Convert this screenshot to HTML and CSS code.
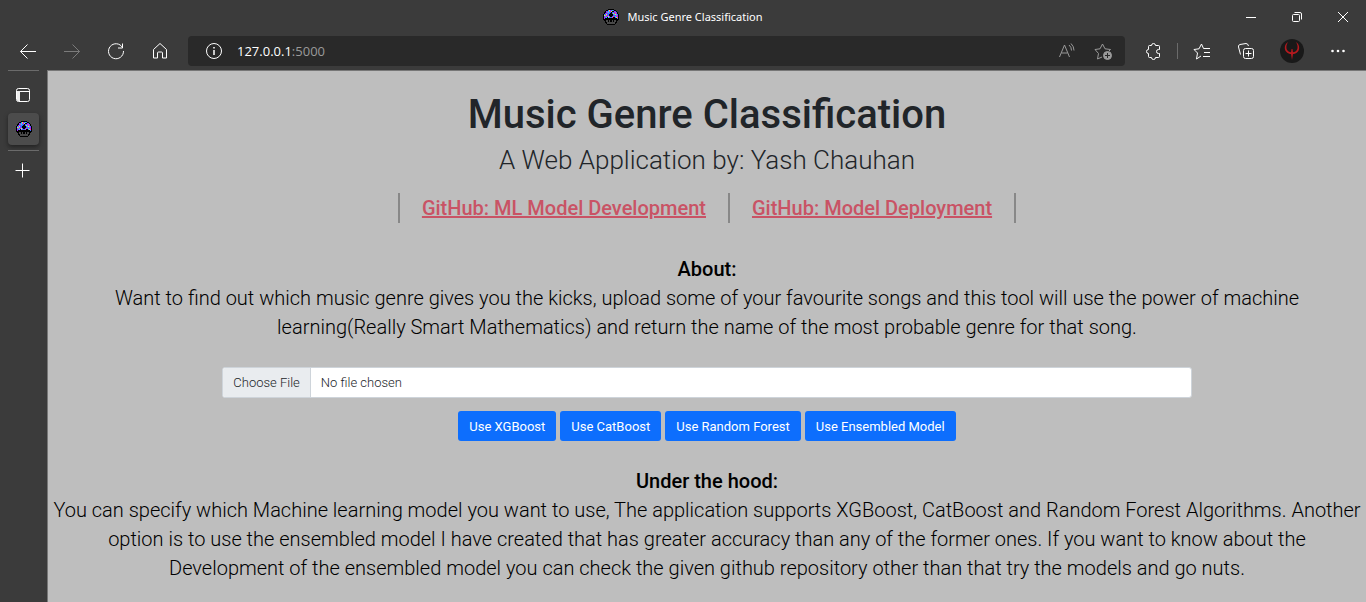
FILE: index.html
```html
<!DOCTYPE html>
<html lang="en">
<head>
<meta charset="utf-8">
<title>Music Genre Classification</title>
<link rel="stylesheet" href="styles.css">
</head>
<body>
<svg class="defs" aria-hidden="true">
  <symbol id="mushroom" viewBox="0 0 16 16" shape-rendering="crispEdges">
    <path fill="#000" d="M5 0h6v1h2v1h1v1h1v2h1v6h-1v1h-1v2h-1v1h-1v1H4v-1H3v-1H2v-2H1v-1H0V5h1V3h1V2h1V1h2z"/>
    <path fill="#3d6cff" d="M5 1h6v1h2v1h1v2h1v5h-1V9h-2V8h-2v1H6V8H4v1H2v1H1V5h1V3h1V2h2z"/>
    <path fill="#a626ff" d="M3 2h1v1H3zM2 4h2v1H2zM4 6h1v2H4zM1 8h1v2H1zM11 2h1v2h-1zM11 6h1v1h-1zM14 6h1v2h-1zM7 1h1v2H7zM13 4h1v1h-1zM6 8h1v1H6z"/>
    <path fill="#20dcff" d="M5 2h1v2H5zM2 6h1v1H2zM11 5h1v1h-1zM12 7h1v1h-1zM3 8h1v1H3zM9 1h1v1H9zM13 5h1v1h-1zM5 8h1v1H5z"/>
    <path fill="#f4ec45" d="M8 2h1v1H8zM3 5h1v1H3zM10 4h1v1h-1zM13 8h1v1h-1zM5 7h1v1H5zM6 1h1v1H6zM1 6h1v1H1zM12 5h1v1h-1z"/>
    <path fill="#ff38a8" d="M6 2h1v1H6zM10 7h1v1h-1zM2 7h1v1H2zM12 3h1v2h-1zM14 8h1v1h-1zM4 3h1v1H4zM3 6h1v1H3zM9 8h1v1H9zM13 6h1v1h-1z"/>
    <path fill="#000" d="M7 4h2v1h1v2H9v1H7V7H6V5h1zM9 2h2v1H9zM2 3h1v1H2zM8 3h1v1H8z"/>
    <path fill="#494949" d="M3 11h2v2h1v-2h1v2h2v-2h1v2h1v-2h2v2h-1v2H4v-2H3z"/>
  </symbol>
</svg>
<div class="browser">
  <header class="chrome">
    <div class="titlebar">
      <div class="window-title"><svg class="favicon"><use href="#mushroom"/></svg><span>Music Genre Classification</span></div>
      <div class="window-controls">
        <button class="win-btn" aria-label="Minimize"><svg viewBox="0 0 16 16"><path d="M3 8.500h10"/></svg></button>
        <button class="win-btn" aria-label="Restore"><svg viewBox="0 0 16 16"><rect x="3.500" y="5.500" width="7" height="7" rx="1"/><path d="M5.500 3.500h5.500a1.500 1.500 0 0 1 1.500 1.500v5.500"/></svg></button>
        <button class="win-btn" aria-label="Close"><svg viewBox="0 0 16 16"><path d="M3 3l10 10M13 3L3 13"/></svg></button>
      </div>
    </div>
    <div class="toolbar">
      <button class="tool" aria-label="Back"><svg viewBox="0 0 20 20"><path d="M18 10.500H2.500M9.500 3.500l-7 7 7 7"/></svg></button>
      <button class="tool faded" aria-label="Forward"><svg viewBox="0 0 20 20"><path d="M2 10.500h15.500M10.500 3.500l7 7-7 7"/></svg></button>
      <button class="tool" aria-label="Refresh"><svg viewBox="0 0 20 20"><path d="M16.500 6.500A7.500 7.500 0 1 0 17.500 10M16.500 2.500v4.500H12"/></svg></button>
      <button class="tool" aria-label="Home"><svg viewBox="0 0 20 20"><path d="M3.500 8.500L10 2.500l6.500 6v8.500h-4v-5a1 1 0 0 0-1-1h-3a1 1 0 0 0-1 1v5h-4z"/></svg></button>
      <div class="address">
        <button class="tool" aria-label="Site information"><svg viewBox="0 0 20 20"><circle cx="10" cy="10" r="7.500"/><path d="M10 9v5M10 6v1.500" stroke-width="1.500"/></svg></button>
        <div class="url">127.0.0.1<span>:5000</span></div>
        <button class="tool muted" aria-label="Read aloud"><svg viewBox="0 0 20 20"><path d="M2.500 16L7.500 4l5 12M4.500 12h6M12 4q2.500 2 2.500 5.500M14 2.500q3 3 3 7"/></svg></button>
        <button class="tool muted" aria-label="Add to favorites"><svg viewBox="0 0 20 20"><path d="M9 16l-4.500 2 1-5.500L2 8.500l5-.7L9.500 3l2.500 4.800 5.500.7-1.500 1.500"/><circle cx="14.500" cy="14.500" r="4" fill="#9a9a9a"/><path stroke="#292929" d="M14.500 12v5M12 14.500h5"/></svg></button>
      </div>
      <div class="actions">
        <button class="tool" aria-label="Extensions"><svg viewBox="0 0 20 20"><path d="M6.500 4.500h2a2 2 0 0 1 4 0h3a1 1 0 0 1 1 1v3h-1a2 2 0 0 0 0 4h1v3a1 1 0 0 1-1 1h-3a2 2 0 0 1-4 0h-2a1 1 0 0 1-1-1v-3a2 2 0 0 1 0-4v-3a1 1 0 0 1 1-1z"/></svg></button>
        <span class="separator"></span>
        <button class="tool" aria-label="Favorites"><svg viewBox="0 0 20 20"><path d="M9 15l-4.500 3 1-6L2 8.500l5-.7L9.500 3l2 4.500H18M12 11.500h6M11 15.500h7"/></svg></button>
        <button class="tool" aria-label="Collections"><svg viewBox="0 0 20 20"><rect x="7.500" y="7.500" width="10" height="10" rx="2"/><path d="M12.500 9.500v6M9.500 12.500h6M4.500 13.500L2.500 6q-.5-2 1.500-2.500l6-1q2 0 2.500 2.500"/></svg></button>
        <button class="profile" aria-label="Profile"><svg viewBox="0 0 24 24"><circle cx="12" cy="12" r="12" fill="#191919"/><path fill="#b5191e" d="M8 3C4.500 5 4 10 6 12.500c1.500 2 4 2.500 5 2.500l1 6 1-6c1 0 3.500-.5 5-2.500 2-2.500 1.500-7.500-2-9.500 2 3 2 7 .5 8.500-1 1-2 1.500-3.500 1.700l-.5-3.200h-1l-.5 3.200c-1.500-.2-2.500-.7-3.500-1.700C6 10 6 6 8 3z"/></svg></button>
        <button class="tool" aria-label="Settings and more"><svg viewBox="0 0 20 20"><g fill="#fff" stroke="none"><circle cx="4.500" cy="10" r="1.300"/><circle cx="10" cy="10" r="1.300"/><circle cx="15.500" cy="10" r="1.300"/></g></svg></button>
      </div>
    </div>
  </header>
  <div class="workspace">
    <nav class="tabs" aria-label="Vertical tabs">
      <button class="tab" aria-label="Tab actions"><svg viewBox="0 0 16 16"><rect x="1.500" y="1.500" width="13" height="13" rx="2"/><path d="M4.500 4.500h10M4.500 4v10.500"/><path fill="#eee" stroke="none" d="M2 4h3v10H3q-1 0-1-1z"/></svg></button>
      <button class="tab active" aria-label="Music Genre Classification"><svg viewBox="0 0 16 16"><use href="#mushroom"/></svg></button>
      <button class="tab new" aria-label="New tab"><svg viewBox="0 0 16 16"><path d="M7.500 .5v14M.5 7.500h14"/></svg></button>
    </nav>
    <main class="page">
      <h1>Music Genre Classification</h1>
      <p class="subtitle">A Web Application by: Yash Chauhan</p>
      <div class="links">
        <a href="#model">GitHub: ML Model Development</a>
        <a href="#deployment">GitHub: Model Deployment</a>
      </div>
      <section class="about">
        <h2>About:</h2>
        <p>Want to find out which music genre gives you the kicks, upload some of your favourite songs and this tool will use the power of machine learning(Really Smart Mathematics) and return the name of the most probable genre for that song.</p>
      </section>
      <form class="upload">
        <input type="file" aria-label="Song file">
        <div class="models">
          <button type="button">Use XGBoost</button>
          <button type="button">Use CatBoost</button>
          <button type="button">Use Random Forest</button>
          <button type="button">Use Ensembled Model</button>
        </div>
      </form>
      <section class="hood">
        <h2>Under the hood:</h2>
        <p>You can specify which Machine learning model you want to use, The application supports XGBoost, CatBoost and Random Forest Algorithms. Another option is to use the ensembled model I have created that has greater accuracy than any of the former ones. If you want to know about the Development of the ensembled model you can check the given github repository other than that try the models and go nuts.</p>
      </section>
    </main>
  </div>
</div>
</body>
</html>
```
FILE: styles.css
```css
* { box-sizing: border-box; }
body { margin: 0; background: #3b3b3b; font-family: Roboto, "Liberation Sans", sans-serif; }
h1, h2, p { margin: 0; }
button { font: inherit; border: 0; padding: 0; background: none; color: inherit; }
svg { fill: none; stroke: #fff; stroke-width: 1; }
.defs { position: absolute; width: 0; height: 0; }
.browser { min-height: 100vh; display: flex; flex-direction: column; }
.chrome { color: #fff; font-family: "Open Sans", "Noto Sans", sans-serif; }
.titlebar { display: grid; grid-template-columns: 1fr auto 1fr; align-items: center; height: 33px; }
.window-title { grid-column: 2; display: flex; align-items: center; gap: 8px; font-family: "Noto Sans", sans-serif; font-size: 11px; }
.favicon { width: 16px; height: 16px; stroke: none; }
#mushroom { stroke: none; }
.window-controls { display: flex; justify-content: flex-end; }
.win-btn { width: 46px; height: 32px; display: grid; place-items: center; }
.win-btn svg { width: 16px; height: 16px; }
.toolbar { display: flex; align-items: center; height: 37px; padding: 0 16px 2px 6px; }
.tool { width: 44px; height: 30px; display: grid; place-items: center; flex: none; }
.tool svg { width: 20px; height: 20px; }
.faded svg { stroke: #7b7b7b; }
.muted svg { stroke: #9a9a9a; }
.address { flex: 1; display: flex; align-items: center; height: 30px; margin-left: 6px; padding: 0 4px; border-radius: 4px; background: #292929; }
.address .muted { width: 36px; }
.url { flex: 1; padding-left: 1px; font-size: 13px; }
.url span { color: #9a9a9a; }
.actions { display: flex; align-items: center; padding-left: 6px; }
.separator { width: 1px; height: 16px; margin: 0 2px; background: #6b6b6b; }
.profile { width: 24px; height: 24px; margin: 0 12px; }
.profile svg { display: block; stroke: none; }
.actions .tool:last-child { margin-right: -10px; }
.workspace { flex: 1; display: flex; }
.tabs { width: 47px; flex: none; padding: 0 8px; display: flex; flex-direction: column; }
.tabs::before { content: ""; height: 1px; background: #6b6b6b; }
.tab { width: 31px; height: 32px; display: grid; place-items: center; }
.tab svg { width: 16px; height: 16px; }
.tab:first-child { margin: 8px 0 2px; padding-right: 1px; }
.tab.active { border-radius: 4px; background: #4c4c4c; box-shadow: 0 2px 4px #222; }
.tab.active svg { stroke: none; }
.tab.new { height: 41px; margin-top: 5px; padding-right: 2px; border-top: 1px solid #6b6b6b; }
.page { flex: 1; min-width: 0; padding: 18px 4px; border: solid #777; border-width: 1px 0 0 1px; background: #bebebe; color: #000; text-align: center; font-size: 20px; font-weight: 300; line-height: 29px; }
h1 { font-size: 40px; line-height: 51px; font-weight: 500; color: #212529; }
h2 { font-size: 20px; line-height: 29px; font-weight: 500; }
.subtitle { margin-top: 1px; font-size: 26px; line-height: 39px; color: #212529; }
.links { display: flex; justify-content: center; width: fit-content; margin: 13px auto 0; border-left: 2px solid #888; line-height: 30px; }
.links a { padding: 0 22px; border-right: 2px solid #888; color: #c95365; font-weight: 500; }
.about { margin-top: 32px; padding: 0 48px; }
.upload { margin: 25px auto 0; width: 74%; font-size: 13px; }
.upload input { display: block; width: 100%; height: 31px; border: 1px solid #ced4da; border-radius: 3px; background: #fff; color: #212529; font: inherit; line-height: 29px; }
.upload input::file-selector-button { height: 29px; margin: 0 10px 0 0; padding: 0 10px; border: 0; border-right: 1px solid #ced4da; background: #e9ecef; color: #212529; font: inherit; }
.models { display: flex; justify-content: center; gap: 4px; margin-top: 13px; }
.models button { height: 30px; padding: 0 11px; border-radius: 3px; background: #0d6efd; color: #fff; font-weight: 400; }
.hood { margin-top: 26px; }
```
